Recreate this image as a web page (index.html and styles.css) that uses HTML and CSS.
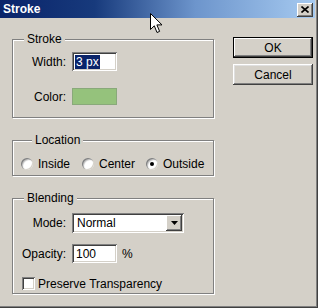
FILE: index.html
```html
<!DOCTYPE html>
<html>
<head>
<meta charset="utf-8">
<link rel="stylesheet" href="styles.css">
</head>
<body>
<div class="window">
  <div class="titlebar">
    <span class="title">Stroke</span>
    <span class="close"><svg width="8" height="7" viewBox="0 0 8 7"><path d="M0.5 0.5 L7.5 6.5 M7.5 0.5 L0.5 6.5" stroke="#000" stroke-width="1.6" fill="none"/></svg></span>
  </div>
  <div class="content">
    <div class="groups">
      <fieldset class="group g-stroke">
        <legend>Stroke</legend>
        <div class="row">
          <span class="lbl">Width:</span>
          <div class="field f-small"><span class="selected">3 px</span></div>
        </div>
        <div class="row row-color">
          <span class="lbl">Color:</span>
          <div class="swatch"></div>
        </div>
      </fieldset>
      <fieldset class="group g-location">
        <legend>Location</legend>
        <div class="radios">
          <span class="opt o1"><span class="radio"></span>Inside</span>
          <span class="opt o2"><span class="radio"></span>Center</span>
          <span class="opt"><span class="radio checked"></span>Outside</span>
        </div>
      </fieldset>
      <fieldset class="group g-blend">
        <legend>Blending</legend>
        <div class="row">
          <span class="lbl">Mode:</span>
          <div class="select"><span class="sel-text">Normal</span><span class="arrow"><svg width="7" height="4" viewBox="0 0 7 4"><path d="M0 0 H7 L3.5 4 Z" fill="#000"/></svg></span></div>
        </div>
        <div class="row row-opacity">
          <span class="lbl">Opacity:</span>
          <div class="with-unit"><div class="field f-small"><span class="val">100</span></div><span class="unit">%</span></div>
        </div>
        <div class="check-row"><span class="checkbox"></span>Preserve Transparency</div>
      </fieldset>
    </div>
    <div class="buttons">
      <div class="btn default"><span>OK</span></div>
      <div class="btn"><span>Cancel</span></div>
    </div>
  </div>
  <svg class="cursor" width="13" height="21" viewBox="0 0 13 21"><path d="M0.5 0.5 L0.5 16.5 L4.3 12.8 L7 19.5 L9.6 18.4 L6.9 11.9 L12 11.9 Z" fill="#fff" stroke="#000" stroke-width="1" stroke-linejoin="miter"/></svg>
</div>
</body>
</html>
```

FILE: styles.css
```css
* { box-sizing: border-box; }
html, body { margin: 0; padding: 0; }
body {
  background: #d4d0c8;
  font-family: "Liberation Sans", Arial, sans-serif;
  font-size: 12px;
  color: #000;
}
.window {
  position: relative;
  width: 318px;
  height: 308px;
  background: #d4d0c8;
  padding: 0 3px 3px 0;
  box-shadow: inset -1px -1px 0 #404040, inset -2px -2px 0 #808080;
}
.titlebar {
  height: 18px;
  background: linear-gradient(to right, #0a246a 0%, #173a7c 30%, #6d95cc 62%, #a6caf0 100%);
  display: flex;
  align-items: center;
  justify-content: space-between;
  padding: 0 2px 0 3px;
}
.title {
  color: #fff;
  font-weight: bold;
  font-size: 12px;
  line-height: 14px;
}
.close {
  width: 16px;
  height: 14px;
  background: #d4d0c8;
  display: flex;
  align-items: center;
  justify-content: center;
  box-shadow: inset -1px -1px 0 #404040, inset 1px 1px 0 #fff, inset -2px -2px 0 #808080;
  margin-top: 1px;
}
.content {
  display: flex;
  padding-left: 12px;
}
.groups {
  width: 202px;
  padding-top: 14px;
  display: flex;
  flex-direction: column;
}
.group {
  margin: 0;
  min-inline-size: 0;
  border: 1px solid #808080;
  box-shadow: inset 1px 1px 0 #fff, 1px 1px 0 #fff;
  padding: 0;
}
.group legend {
  margin-left: 11px;
  padding: 0 3px;
  line-height: 14px;
  background: #d4d0c8;
}
.g-location { margin-top: 15px; }
.g-blend { margin-top: 15px; }
.g-stroke { padding: 6px 0 12px 0; }
.g-location { padding: 10px 0 5px 8px; }
.g-blend { padding: 8px 0 3px 0; }

.row {
  display: grid;
  grid-template-columns: 53px auto;
  column-gap: 6px;
  align-items: center;
}
.lbl { text-align: right; line-height: 14px; }
.row-color { margin-top: 17px; }
.row-opacity { margin-top: 11px; }

.field {
  background: #fff;
  height: 19px;
  box-shadow: inset 1px 1px 0 #808080, inset -1px -1px 0 #fff, inset 2px 2px 0 #404040, inset -2px -2px 0 #d4d0c8;
  display: flex;
  align-items: center;
  padding-left: 3px;
}
.f-small { width: 45px; }
.selected {
  background: #0a246a;
  color: #fff;
  line-height: 14px;
  padding: 0 1px;
}
.val { padding-left: 1px; }
.swatch {
  width: 45px;
  height: 17px;
  background: #95c27c;
  border: 1px solid #89a97a;
}
.with-unit { display: flex; align-items: center; gap: 5px; }

.radios { display: flex; align-items: center; height: 13px; }
.opt { display: flex; align-items: center; gap: 5px; line-height: 14px; }
.o1 { width: 61px; }
.o2 { width: 64px; }
.radio {
  width: 12px;
  height: 12px;
  border-radius: 50%;
  background: #fff;
  box-shadow: inset 1px 1px 0 #808080, inset -1px -1px 0 #d4d0c8, inset 2px 2px 1px #c0c0c0;
  display: flex;
  align-items: center;
  justify-content: center;
}
.radio.checked::after {
  content: "";
  width: 4px;
  height: 4px;
  border-radius: 50%;
  background: #000;
}

.select {
  width: 112px;
  height: 20px;
  background: #fff;
  box-shadow: inset 1px 1px 0 #808080, inset -1px -1px 0 #fff, inset 2px 2px 0 #404040, inset -2px -2px 0 #d4d0c8;
  display: flex;
  align-items: center;
  justify-content: space-between;
  padding: 2px 2px 2px 5px;
}
.sel-text { line-height: 14px; }
.arrow {
  width: 16px;
  height: 16px;
  background: #d4d0c8;
  box-shadow: inset -1px -1px 0 #404040, inset 1px 1px 0 #fff, inset -2px -2px 0 #808080;
  display: flex;
  align-items: center;
  justify-content: center;
}

.check-row {
  display: flex;
  align-items: center;
  gap: 3px;
  margin-top: 14px;
  padding-left: 9px;
  height: 13px;
  line-height: 14px;
}
.checkbox {
  width: 13px;
  height: 13px;
  background: #fff;
  box-shadow: inset 1px 1px 0 #808080, inset -1px -1px 0 #fff, inset 2px 2px 0 #404040, inset -2px -2px 0 #d4d0c8;
}

.buttons {
  margin-left: 19px;
  padding-top: 19px;
  display: flex;
  flex-direction: column;
  gap: 6px;
}
.btn {
  width: 80px;
  height: 21px;
  background: #d4d0c8;
  box-shadow: inset -1px -1px 0 #404040, inset 1px 1px 0 #fff, inset -2px -2px 0 #808080, inset 2px 2px 0 #dfdfdf;
  display: flex;
  align-items: center;
  justify-content: center;
  line-height: 14px;
}
.btn.default {
  border: 1px solid #000;
  box-shadow: inset -1px -1px 0 #404040, inset 1px 1px 0 #fff, inset -2px -2px 0 #808080;
}
.cursor {
  position: absolute;
  left: 150px;
  top: 13px;
}
```
